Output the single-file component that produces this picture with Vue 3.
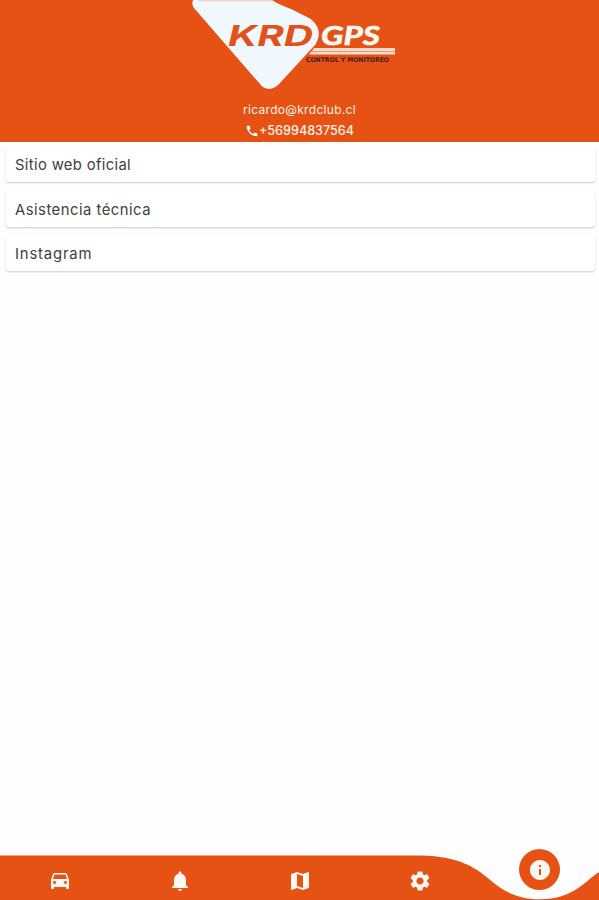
<template>
  <div class="screen">
    <header class="header">
      <svg class="logo" viewBox="0 0 210 92" role="img" aria-label="KRD GPS">
        <path
          class="logo-shape"
          d="M3 0H82C88 4 94 6 101 9L119 18C129 24 132 35 125 45L89 84C84 90 75 91 70 84L4 8C2 5 2 3 3 0Z"
        />
        <path class="logo-edge" d="M9 0H81L85 1.5H8Z" />
        <text class="logo-krd" x="38" y="45.5" textLength="85" lengthAdjust="spacingAndGlyphs">KRD</text>
        <text class="logo-gps" x="131" y="45" textLength="59" lengthAdjust="spacingAndGlyphs">GPS</text>
        <path class="logo-stripe" d="M124 48H205V51H122Z" />
        <path class="logo-stripe" d="M121 51.6H205V54.6H119Z" />
        <text class="logo-tagline" x="116" y="62" textLength="83" lengthAdjust="spacingAndGlyphs">CONTROL Y MONITOREO</text>
      </svg>
      <div class="email">ricardo@krdclub.cl</div>
      <div class="phone">
        <svg class="phone-icon" viewBox="0 0 24 24"><path :d="phoneIcon" /></svg>
        <span class="number">+56994837564</span>
      </div>
    </header>

    <main class="list">
      <a v-for="link in links" :key="link.label" class="card">
        <span :class="link.size">{{ link.label }}</span>
      </a>
    </main>

    <nav class="navbar">
      <svg class="navbar-bg" viewBox="0 0 599 52" preserveAspectRatio="none">
        <path d="M0 7.4H416C446 7.4 465 13 480 24C494 34 507 51.2 540 51.2C572 51.2 583 35 599 24V52H0Z" />
      </svg>
      <button v-for="tab in tabs" :key="tab.name" class="tab" :class="{ active: tab.active }" :aria-label="tab.name">
        <span class="bubble">
          <svg class="tab-icon" viewBox="0 0 24 24"><path :d="tab.icon" /></svg>
        </span>
      </button>
    </nav>
  </div>
</template>

<script setup>
const links = [
  { label: 'Sitio web oficial', size: 'site' },
  { label: 'Asistencia técnica', size: 'support' },
  { label: 'Instagram', size: 'social' },
];

const phoneIcon =
  'M20.01 15.38c-1.23 0-2.42-.2-3.53-.56-.35-.12-.74-.03-1.01.24l-1.57 1.97c-2.83-1.35-5.48-3.9-6.89-6.83l1.95-1.66c.27-.28.35-.67.24-1.02-.37-1.11-.56-2.3-.56-3.53 0-.54-.45-.99-.99-.99H4.19C3.65 3 3 3.24 3 3.99 3 13.28 10.73 21 20.01 21c.71 0 .99-.63.99-1.18v-3.45c0-.54-.45-.99-.99-.99z';

const tabs = [
  {
    name: 'Vehículos',
    icon: 'M18.92 5.01C18.72 4.42 18.16 4 17.5 4h-11c-.66 0-1.21.42-1.42 1.01L3 11v8c0 .55.45 1 1 1h1c.55 0 1-.45 1-1v-1h12v1c0 .55.45 1 1 1h1c.55 0 1-.45 1-1v-8l-2.08-5.99zM6.5 15c-.83 0-1.5-.67-1.5-1.5S5.67 12 6.5 12s1.5.67 1.5 1.5S7.33 15 6.5 15zm11 0c-.83 0-1.5-.67-1.5-1.5s.67-1.5 1.5-1.5 1.5.67 1.5 1.5-.67 1.5-1.5 1.5zM5 10l1.5-4.5h11L19 10H5z',
  },
  {
    name: 'Notificaciones',
    icon: 'M12 22c1.1 0 2-.9 2-2h-4c0 1.1.89 2 2 2zm6-6v-5c0-3.07-1.64-5.64-4.5-6.32V4c0-.83-.67-1.5-1.5-1.5s-1.5.67-1.5 1.5v.68C7.63 5.36 6 7.92 6 11v5l-2 2v1h16v-1l-2-2z',
  },
  {
    name: 'Mapa',
    icon: 'M20.5 3l-.16.03L15 5.1 9 3 3.36 4.9c-.21.07-.36.25-.36.48V20.5c0 .28.22.5.5.5l.16-.03L9 18.9l6 2.1 5.64-1.9c.21-.07.36-.25.36-.48V3.5c0-.28-.22-.5-.5-.5zM15 19l-6-2.11V5l6 2.11V19z',
  },
  {
    name: 'Ajustes',
    icon: 'M19.14 12.94c.04-.3.06-.61.06-.94 0-.32-.02-.64-.07-.94l2.03-1.58c.18-.14.23-.41.12-.61l-1.92-3.32c-.12-.22-.37-.29-.59-.22l-2.39.96c-.5-.38-1.03-.7-1.62-.94l-.36-2.54c-.04-.24-.24-.41-.48-.41h-3.84c-.24 0-.43.17-.47.41l-.36 2.54c-.59.24-1.13.57-1.62.94l-2.39-.96c-.22-.08-.47 0-.59.22L2.74 8.87c-.12.21-.08.47.12.61l2.03 1.58c-.05.3-.09.63-.09.94s.02.64.07.94l-2.03 1.58c-.18.14-.23.41-.12.61l1.92 3.32c.12.22.37.29.59.22l2.39-.96c.5.38 1.03.7 1.62.94l.36 2.54c.05.24.24.41.48.41h3.84c.24 0 .44-.17.47-.41l.36-2.54c.59-.24 1.13-.56 1.62-.94l2.39.96c.22.08.47 0 .59-.22l1.92-3.32c.12-.22.07-.47-.12-.61l-2.01-1.58zM12 15.6c-1.98 0-3.6-1.62-3.6-3.6s1.62-3.6 3.6-3.6 3.6 1.62 3.6 3.6-1.62 3.6-3.6 3.6z',
  },
  {
    name: 'Información',
    active: true,
    icon: 'M12 2C6.48 2 2 6.48 2 12s4.48 10 10 10 10-4.48 10-10S17.52 2 12 2zm1 15h-2v-6h2v6zm0-8h-2V7h2v2z',
  },
];
</script>

<style>
body {
  margin: 0;
  background: #fefefe;
}
</style>

<style scoped>
.screen {
  display: flex;
  flex-direction: column;
  height: 100vh;
  overflow: hidden;
  background: #fefefe;
  font-family: Inter, "Open Sans", sans-serif;
}

/* Cabecera */
.header {
  display: flex;
  flex-direction: column;
  align-items: center;
  height: 142px;
  background: #e65213;
  color: #fff0e8;
}

.logo {
  width: 210px;
  height: 92px;
  margin-right: 9px;
  flex: none;
}
.logo-shape { fill: #f0f8fd; }
.logo-edge { fill: #f8d5cb; }
.logo-krd {
  font: italic 700 28px Inter, sans-serif;
  fill: #e2501b;
}
.logo-gps {
  font: italic 700 27px Lato, sans-serif;
  fill: #fff8f3;
  stroke: #fff8f3;
  stroke-width: 0.7;
}
.logo-stripe { fill: #fbdccd; }
.logo-tagline {
  font: bold 6.5px "DejaVu Sans", sans-serif;
  fill: #4b1d28;
}

.email {
  margin-top: 8px;
  font-size: 12px;
  line-height: 20px;
  letter-spacing: 0.3px;
}

.phone {
  display: flex;
  align-items: center;
  height: 20px;
}
.phone-icon {
  width: 14px;
  height: 14px;
  margin-top: 1px;
  fill: #fff;
}
.number {
  font-size: 12.6px;
  font-weight: 500;
}

/* Enlaces */
.list {
  display: flex;
  flex-direction: column;
  flex: 1;
  gap: 9px;
  padding: 4.5px 4px 0 6px;
}

.card {
  display: flex;
  align-items: center;
  box-sizing: border-box;
  height: 35.5px;
  padding: 2px 0 0 9px;
  border-radius: 3px;
  background: #fff;
  box-shadow: 0 1px 2px rgba(0, 0, 0, 0.2);
  color: #404040;
  font-size: 14.8px;
  line-height: 20px;
}
.site { letter-spacing: 0.35px; }
.support { letter-spacing: 0.5px; }
.social { letter-spacing: 0.85px; }

/* Barra inferior */
.navbar {
  position: relative;
  display: flex;
  height: 52px;
  flex: none;
}
.navbar-bg {
  position: absolute;
  inset: 0;
  width: 100%;
  height: 100%;
  fill: #e65213;
}

.tab {
  position: relative;
  display: flex;
  flex: 1;
  justify-content: center;
  align-items: flex-start;
  padding: 12px 0 0 1px;
  border: 0;
  background: none;
}
.bubble {
  display: flex;
  justify-content: center;
  align-items: center;
  width: 41px;
  height: 41px;
  border-radius: 50%;
}
.tab-icon {
  width: 24px;
  height: 24px;
  fill: #fff8f2;
}

.active {
  padding-top: 1px;
}
.active .bubble {
  background: #e65213;
}
</style>
